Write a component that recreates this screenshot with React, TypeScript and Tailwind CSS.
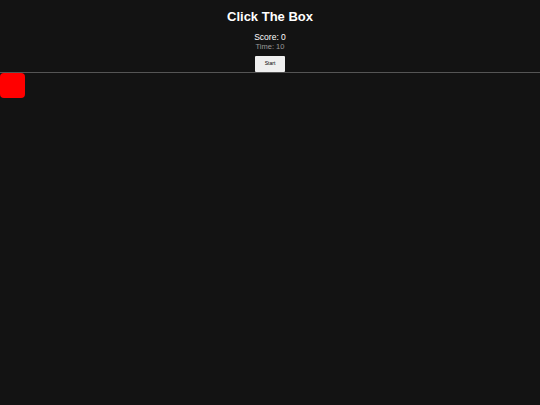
export default function App() {
  return (
    <div className="min-h-[405px] bg-[#131313] text-white" style={{ fontFamily: "'Liberation Sans', Arial, sans-serif" }}>
      <header className="flex flex-col items-center border-b border-[#555]">
        <h1 className="mt-[9px] text-[13px] font-bold leading-[16px]">Click The Box</h1>
        <div className="mt-[8px] text-[8.5px] leading-[9px]">Score: 0</div>
        <div className="text-[7.5px] leading-[9px] text-[#9a9a9a]">Time: 10</div>
        <button className="mt-[5px] h-[16px] w-[30px] rounded-[1px] bg-[#efefef] text-[5px] text-black">Start</button>
      </header>
      <div className="relative">
        <button className="h-[25px] w-[25px] rounded-[4px] bg-[#ff0000]" aria-label="box" />
      </div>
    </div>
  );
}
